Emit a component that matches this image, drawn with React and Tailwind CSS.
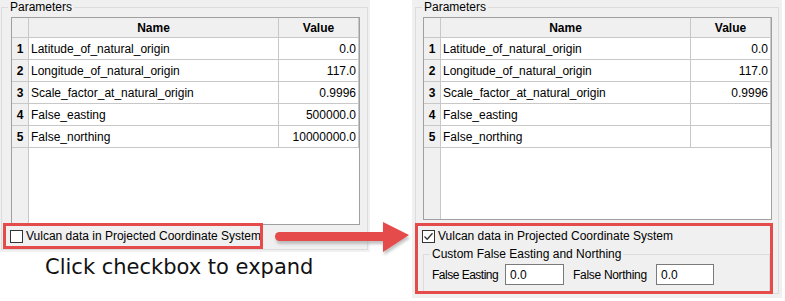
import React from 'react';

const ROWS = [
  'Latitude_of_natural_origin',
  'Longitude_of_natural_origin',
  'Scale_factor_at_natural_origin',
  'False_easting',
  'False_northing',
];

const ui = { fontFamily: '"Liberation Sans", Arial, sans-serif' };

const Checkbox = ({ checked }) => (
  <div className="w-[13px] h-[13px] border border-[#333333] bg-white flex items-center justify-center shrink-0">
    {checked && (
      <svg width="11" height="11" viewBox="0 0 11 11">
        <path d="M1.5 5.5 L4.2 8.2 L9.5 2.2" fill="none" stroke="#333333" strokeWidth="1.3" />
      </svg>
    )}
  </div>
);

const ParamTable = ({ values, height }) => (
  <div className={`w-[349px] ${height} border border-[#a0a0a0] bg-white flex flex-col text-[12px] text-black`}>
    <div className="flex h-[20px] bg-[#f0f0f0] border-b border-[#c8c8c8] font-bold">
      <div className="w-[17px] border-r border-[#c8c8c8]" />
      <div className="w-[250px] border-r border-[#c8c8c8] flex items-center justify-center">Name</div>
      <div className="w-[80px] border-r border-[#c8c8c8] flex items-center justify-center">Value</div>
    </div>
    {ROWS.map((name, i) => (
      <div key={name} className="flex h-[22px] border-b border-[#c8c8c8]">
        <div className="w-[17px] border-r border-[#c8c8c8] bg-[#f0f0f0] font-bold flex items-center justify-center">
          {i + 1}
        </div>
        <div className="w-[250px] border-r border-[#c8c8c8] flex items-center pl-[2px]">{name}</div>
        <div className="w-[80px] border-r border-[#c8c8c8] flex items-center justify-end pr-[2px]">{values[i]}</div>
      </div>
    ))}
    <div className="flex-1 flex">
      <div className="w-[17px] bg-[#f0f0f0] border-r border-[#c8c8c8]" />
    </div>
  </div>
);

const App = () => {
  return (
    <div className="relative w-[785px] h-[301px] bg-white flex overflow-hidden" style={ui}>
      {/* Before */}
      <div className="w-[412px] flex flex-col">
        <div className="w-[370px] h-[252px] bg-[#f0f0f0] pl-[1px] pr-[2px] pb-[2px]">
          <fieldset className="h-full border border-[#dcdcdc]">
            <legend className="ml-[6px] px-[2px] text-[12px] leading-[14px] text-black">Parameters</legend>
            <div className="ml-[9px] mt-[3px]">
              <ParamTable height="h-[208px]" values={['0.0', '117.0', '0.9996', '500000.0', '10000000.0']} />
            </div>
            <div className="flex items-center gap-[3px] ml-[8px] mt-[4px] text-[12px] leading-[14px] text-black">
              <Checkbox />
              <span>Vulcan data in Projected Coordinate System</span>
            </div>
          </fieldset>
        </div>
        <div
          className="pl-[45px] mt-[3px] text-[21px] leading-[25px] text-[#111111] whitespace-nowrap"
          style={{ fontFamily: '"DejaVu Sans", Verdana, sans-serif' }}
        >
          Click checkbox to expand
        </div>
      </div>

      {/* After */}
      <div className="w-[370px] h-[298px] bg-[#f0f0f0] pl-[3px] pr-[3px] pb-[4px]">
        <fieldset className="h-full border border-[#dcdcdc]">
          <legend className="ml-[6px] px-[2px] text-[12px] leading-[14px] text-black">Parameters</legend>
          <div className="ml-[7px] mt-[3px]">
            <ParamTable height="h-[203px]" values={['0.0', '117.0', '0.9996', '', '']} />
          </div>
          <div className="flex items-center gap-[3px] ml-[6px] mt-[9px] text-[12px] leading-[14px] text-black">
            <Checkbox checked />
            <span>Vulcan data in Projected Coordinate System</span>
          </div>
          <fieldset className="ml-[7px] mt-[4px] w-[347px] border border-[#dcdcdc] pb-[6px]">
            <legend className="ml-[6px] px-[2px] text-[12px] leading-[14px] text-black">
              Custom False Easting and Northing
            </legend>
            <div className="flex items-center pl-[8px] pt-[3px] text-[12px] text-black">
              <span className="w-[73px] whitespace-nowrap tracking-[-0.5px]">False Easting</span>
              <div className="w-[59px] h-[21px] border border-[#7a7a7a] bg-white flex items-center pl-[4px]">0.0</div>
              <span className="ml-[9px] w-[83px] whitespace-nowrap tracking-[-0.3px]">False Northing</span>
              <div className="w-[58px] h-[21px] border border-[#7a7a7a] bg-white flex items-center pl-[4px]">0.0</div>
            </div>
          </fieldset>
        </fieldset>
      </div>

      {/* Annotations */}
      <div className="absolute left-[3px] top-[223px] w-[260px] h-[26px] border-[3px] border-[#e54b4b]" />
      <div className="absolute left-[415px] top-[223px] w-[358px] h-[71px] border-[3px] border-[#e54b4b]" />
      <svg className="absolute left-[268px] top-[214px]" width="150" height="44" viewBox="0 0 150 44">
        <defs>
          <filter id="sh" x="-10%" y="-30%" width="120%" height="160%">
            <feGaussianBlur stdDeviation="1.5" />
          </filter>
        </defs>
        <g fill="#9a9a9a" opacity="0.6" filter="url(#sh)" transform="translate(1 3)">
          <rect x="7" y="18" width="112" height="9" rx="4.5" />
          <polygon points="115,8 141,21 115,38" />
        </g>
        <g fill="#e54b4b">
          <rect x="7" y="18" width="112" height="9" rx="4.5" />
          <polygon points="115,8 141,21 115,38" />
        </g>
      </svg>
    </div>
  );
};

export default App;
